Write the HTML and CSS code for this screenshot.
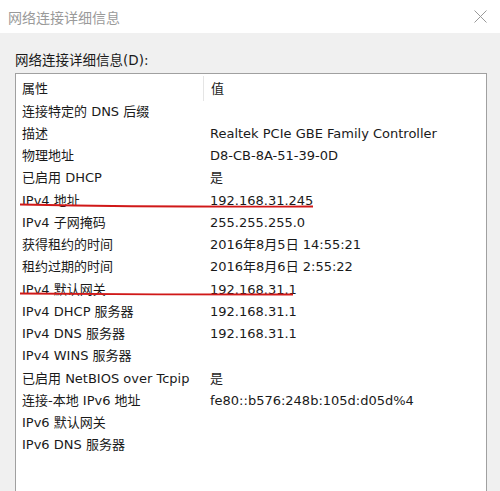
FILE: index.html
```html
<!DOCTYPE html>
<html lang="zh-CN">
<head>
  <meta charset="UTF-8" />
  <title>网络连接详细信息</title>
  <link rel="stylesheet" href="styles.css">
</head>
<body>
<div class="titlebar">
  <span class="title">网络连接详细信息</span>
  <span class="close">
    <svg width="13" height="13" viewBox="0 0 13 13"><path d="M0.5 0.5 L12.5 12.5 M12.5 0.5 L0.5 12.5" stroke="#999" stroke-width="1" fill="none"/></svg>
  </span>
</div>

<div class="content">
  <div class="caption">网络连接详细信息(D):</div>
  <div class="listbox">
    <div class="row head">
      <div class="cell prop">属性</div>
      <div class="cell val">值</div>
    </div>
    <div class="row"><div class="cell prop">连接特定的 DNS 后缀</div><div class="cell val"></div></div>
    <div class="row"><div class="cell prop">描述</div><div class="cell val">Realtek PCIe GBE Family Controller</div></div>
    <div class="row"><div class="cell prop">物理地址</div><div class="cell val">D8-CB-8A-51-39-0D</div></div>
    <div class="row"><div class="cell prop">已启用 DHCP</div><div class="cell val">是</div></div>
    <div class="row"><div class="cell prop">IPv4 地址</div><div class="cell val">192.168.31.245</div></div>
    <div class="row"><div class="cell prop">IPv4 子网掩码</div><div class="cell val">255.255.255.0</div></div>
    <div class="row"><div class="cell prop">获得租约的时间</div><div class="cell val">2016年8月5日 14:55:21</div></div>
    <div class="row"><div class="cell prop">租约过期的时间</div><div class="cell val">2016年8月6日 2:55:22</div></div>
    <div class="row"><div class="cell prop">IPv4 默认网关</div><div class="cell val">192.168.31.1</div></div>
    <div class="row"><div class="cell prop">IPv4 DHCP 服务器</div><div class="cell val">192.168.31.1</div></div>
    <div class="row"><div class="cell prop">IPv4 DNS 服务器</div><div class="cell val">192.168.31.1</div></div>
    <div class="row"><div class="cell prop">IPv4 WINS 服务器</div><div class="cell val"></div></div>
    <div class="row"><div class="cell prop">已启用 NetBIOS over Tcpip</div><div class="cell val">是</div></div>
    <div class="row"><div class="cell prop">连接-本地 IPv6 地址</div><div class="cell val">fe80::b576:248b:105d:d05d%4</div></div>
    <div class="row"><div class="cell prop">IPv6 默认网关</div><div class="cell val"></div></div>
    <div class="row"><div class="cell prop">IPv6 DNS 服务器</div><div class="cell val"></div></div>

    <svg class="marks" width="470" height="400" viewBox="0 0 470 400">
      <path d="M4 130.5 C80 132 200 133 297 132.5" stroke="#d01818" stroke-width="1.8" fill="none"/>
      <path d="M4 219.5 C80 220 200 221 277 220.5" stroke="#d01818" stroke-width="1.8" fill="none"/>
    </svg>
  </div>
</div>
</body>
</html>
```

FILE: styles.css
```css
html, body {
  margin: 0;
  height: 100%;
  overflow: hidden;
  background-color: #f0f0f0;
  font-family: "DejaVu Sans", "Noto Sans CJK SC", sans-serif;
  color: #1a1a1a;
}

.titlebar {
  height: 33px;
  background-color: #fff;
  display: flex;
  align-items: center;
  justify-content: space-between;
  padding: 0 13px 0 8px;
}

.title {
  font-family: "Noto Sans CJK SC", sans-serif;
  font-size: 14px;
  color: #9a9a9a;
}

.close {
  display: flex;
  align-items: center;
}

.content {
  padding: 17px 13px 0 15px;
}

.caption {
  font-size: 13.5px;
  line-height: 20px;
  margin-bottom: 3px;
}

.listbox {
  position: relative;
  box-sizing: border-box;
  background-color: #fff;
  border: 1px solid #a0a0a0;
  border-bottom: none;
  height: 418px;
  padding-top: 1.5px;
  font-size: 13px;
}

.row {
  display: flex;
  height: 22.25px;
  line-height: 22.25px;
}

.row.head {
  height: 25px;
  line-height: 25px;
}

.cell {
  white-space: nowrap;
}

.prop {
  width: 181px;
  padding-left: 6px;
}

.val {
  padding-left: 7px;
}

.head .prop {
  border-right: 1px solid #e5e5e5;
}

.marks {
  position: absolute;
  left: 0;
  top: 0;
  pointer-events: none;
}
```
